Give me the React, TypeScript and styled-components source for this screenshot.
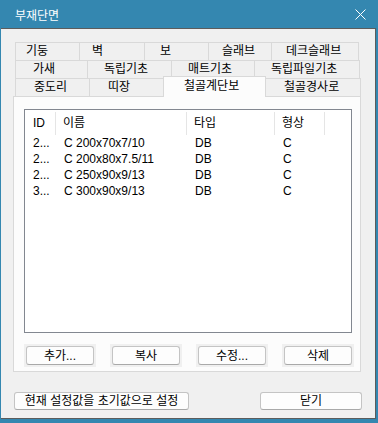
import React from 'react';
import styled, { createGlobalStyle } from 'styled-components';

const GlobalStyle = createGlobalStyle`
  html, body {
    margin: 0;
    padding: 0;
    background: #3487b0;
  }
  body {
    font-family: "Liberation Sans", "Noto Sans CJK KR", sans-serif;
    font-size: 12px;
    color: #000;
  }
`;

const Window = styled.div`
  width: 378px;
  height: 423px;
  display: flex;
  flex-direction: column;
  background: #3487b0;
  box-sizing: border-box;
  padding: 0 2px 4px 1px;
`;

const TitleBar = styled.div`
  height: 28px;
  flex: none;
  display: flex;
  align-items: center;
  justify-content: space-between;
  padding: 0 10px 0 14px;
  color: #fff;
  font-size: 12px;
`;

const Client = styled.div`
  flex: 1;
  display: flex;
  flex-direction: column;
  background: #f0f0f0;
  border-top: 1px solid #5c5c5c;
  border-right: 1px solid #5c5c5c;
  border-bottom: 1px solid #5c5c5c;
  padding: 13px 0 0 12px;
`;

const TabControl = styled.div`
  width: 348px;
  display: flex;
  flex-direction: column;
`;

const TabRow = styled.div`
  display: flex;
  height: 18px;
  margin: 0 2px;
`;

const Tab = styled.div<{ w: number; pad: number; active?: boolean }>`
  box-sizing: border-box;
  width: ${p => p.w}px;
  flex: none;
  padding-left: ${p => p.pad}px;
  border: 1px solid #d9d9d9;
  border-bottom: none;
  margin-right: -1px;
  background: ${p => (p.active ? '#fcfcfc' : '#f0f0f0')};
  line-height: 16px;
  white-space: nowrap;
  position: relative;
  ${p =>
    p.active &&
    `
    margin: -2px -2px -1px -2px;
    height: 21px;
    width: ${p.w + 4}px;
    z-index: 1;
    line-height: 18px;
  `}
`;

const Panel = styled.div`
  box-sizing: border-box;
  height: 276px;
  border: 1px solid #d9d9d9;
  background: #fcfcfc;
  padding: 12px 0 0 10px;
  display: flex;
  flex-direction: column;
`;

const ListView = styled.div`
  box-sizing: border-box;
  width: 328px;
  height: 224px;
  border: 1px solid #828790;
  background: #fff;
`;

const HeaderRow = styled.div`
  display: flex;
  height: 25px;
`;

const HeaderCell = styled.div<{ w: number; pad?: number }>`
  box-sizing: border-box;
  width: ${p => p.w}px;
  flex: none;
  padding-left: ${p => p.pad ?? 7}px;
  margin-top: 2px;
  line-height: 22px;
  border-right: 1px solid #e5e5e5;
`;

const Row = styled.div`
  display: flex;
  height: 16px;
  line-height: 16px;
`;

const Cell = styled.div<{ w: number; pad?: number }>`
  box-sizing: border-box;
  width: ${p => p.w}px;
  flex: none;
  padding-left: ${p => p.pad ?? 8}px;
  white-space: nowrap;
  overflow: hidden;
`;

const ButtonBar = styled.div`
  display: flex;
  gap: 14px;
  margin-top: 11px;
`;

const Plate = styled.div`
  padding: 2px;
  background: #f0f0f0;
`;

const Button = styled.button<{ w: number; h?: number }>`
  box-sizing: border-box;
  width: ${p => p.w}px;
  height: ${p => p.h ?? 19}px;
  padding: 0;
  margin: 0;
  border: 1px solid #c4c4c4;
  border-bottom-color: #a9a9a9;
  border-radius: 3px;
  background: #fdfdfd;
  font-family: "Liberation Sans", "Noto Sans CJK KR", sans-serif;
  font-size: 12px;
  color: #000;
  line-height: 16px;
  white-space: nowrap;
`;

const Footer = styled.div`
  display: flex;
  justify-content: space-between;
  width: 348px;
  margin-top: 20px;
  padding-left: 1px;
`;

const rows = [
  ['2...', 'C 200x70x7/10', 'DB', 'C'],
  ['2...', 'C 200x80x7.5/11', 'DB', 'C'],
  ['2...', 'C 250x90x9/13', 'DB', 'C'],
  ['3...', 'C 300x90x9/13', 'DB', 'C'],
];

const cols = [31, 131, 88, 50];

const CloseIcon = () => (
  <svg width="11" height="11" viewBox="0 0 11 11">
    <path d="M0.5 0.5 L10.5 10.5 M10.5 0.5 L0.5 10.5" stroke="#fff" strokeWidth="1" />
  </svg>
);

export default function App() {
  return (
    <>
      <GlobalStyle />
      <Window>
        <TitleBar>
          <span>부재단면</span>
          <CloseIcon />
        </TitleBar>
        <Client>
          <TabControl>
            <TabRow>
              <Tab w={65} pad={10}>기둥</Tab>
              <Tab w={66} pad={12}>벽</Tab>
              <Tab w={65} pad={15}>보</Tab>
              <Tab w={64} pad={13}>슬래브</Tab>
              <Tab w={88} pad={14}>데크슬래브</Tab>
            </TabRow>
            <TabRow>
              <Tab w={73} pad={17}>가새</Tab>
              <Tab w={85} pad={16}>독립기초</Tab>
              <Tab w={84} pad={16}>매트기초</Tab>
              <Tab w={106} pad={16}>독립파일기초</Tab>
            </TabRow>
            <TabRow>
              <Tab w={75} pad={18}>중도리</Tab>
              <Tab w={77} pad={18}>띠장</Tab>
              <Tab w={99} pad={20} active>철골계단보</Tab>
              <Tab w={97} pad={19}>철골경사로</Tab>
            </TabRow>
            <Panel>
              <ListView>
                <HeaderRow>
                  <HeaderCell w={cols[0]} pad={8}>ID</HeaderCell>
                  <HeaderCell w={cols[1]}>이름</HeaderCell>
                  <HeaderCell w={cols[2]}>타입</HeaderCell>
                  <HeaderCell w={cols[3]}>형상</HeaderCell>
                </HeaderRow>
                {rows.map((r, i) => (
                  <Row key={i}>
                    <Cell w={cols[0]} pad={8}>{r[0]}</Cell>
                    <Cell w={cols[1]}>{r[1]}</Cell>
                    <Cell w={cols[2]}>{r[2]}</Cell>
                    <Cell w={cols[3]}>{r[3]}</Cell>
                  </Row>
                ))}
              </ListView>
              <ButtonBar>
                <Plate><Button w={68}>추가...</Button></Plate>
                <Plate><Button w={68}>복사</Button></Plate>
                <Plate><Button w={68}>수정...</Button></Plate>
                <Plate><Button w={68}>삭제</Button></Plate>
              </ButtonBar>
            </Panel>
          </TabControl>
          <Footer>
            <Button w={175} h={18}>현재 설정값을 초기값으로 설정</Button>
            <Button w={102} h={18}>닫기</Button>
          </Footer>
        </Client>
      </Window>
    </>
  );
}
